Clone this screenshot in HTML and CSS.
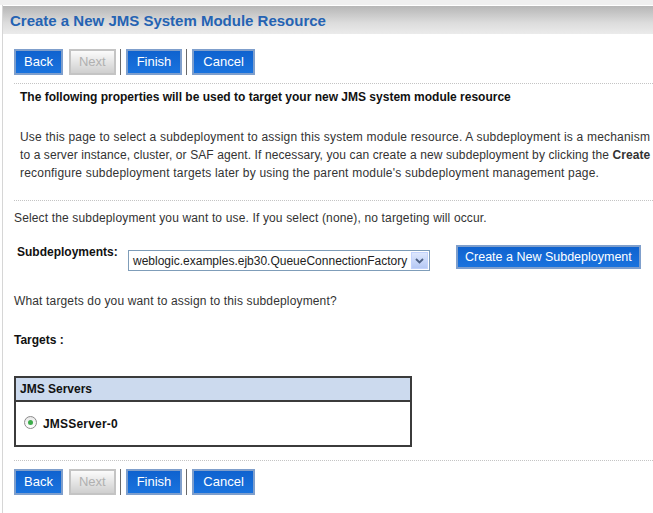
FILE: index.html
```html
<!DOCTYPE html>
<html>
<head>
<meta charset="utf-8">
<title>Create a New JMS System Module Resource</title>
<link rel="stylesheet" href="styles.css">
</head>
<body>
<div class="topstrip"></div>
<div class="page">
  <div class="titlebar"><h1 class="title">Create a New JMS System Module Resource</h1></div>
  <div class="content">
    <div class="btnrow top">
      <button class="btn">Back</button>
      <button class="btn disabled">Next</button>
      <span class="sep"></span>
      <button class="btn finish">Finish</button>
      <span class="sep"></span>
      <button class="btn cancel">Cancel</button>
    </div>
    <div class="dots"></div>
    <div class="intro">
      <p class="lead">The following properties will be used to target your new JMS system module resource</p>
      <p class="desc">Use this page to select a subdeployment to assign this system module resource. A subdeployment is a mechanism<br><span class="tight">to a server instance, cluster, or SAF agent. If necessary, you can create a new subdeployment by clicking the <b>Create</b> a</span><br>reconfigure subdeployment targets later by using the parent module's subdeployment management page.</p>
    </div>
    <div class="dots"></div>
    <p class="text first">Select the subdeployment you want to use. If you select (none), no targeting will occur.</p>
    <div class="subrow">
      <span class="label">Subdeployments:</span>
      <div class="select">
        <span class="selval">weblogic.examples.ejb30.QueueConnectionFactory</span>
        <span class="selarrow"><svg width="9" height="6" viewBox="0 0 9 6"><path d="M1 1 L4.5 4.5 L8 1" fill="none" stroke="#4d6185" stroke-width="1.8"/></svg></span>
      </div>
      <button class="btn create">Create a New Subdeployment</button>
    </div>
    <p class="text what">What targets do you want to assign to this subdeployment?</p>
    <p class="label targets">Targets :</p>
    <div class="table">
      <div class="thead">JMS Servers</div>
      <div class="trow"><span class="radio"><span class="dot"></span></span><span class="server">JMSServer-0</span></div>
    </div>
    <div class="dots bottom"></div>
    <div class="btnrow">
      <button class="btn">Back</button>
      <button class="btn disabled">Next</button>
      <span class="sep"></span>
      <button class="btn finish">Finish</button>
      <span class="sep"></span>
      <button class="btn cancel">Cancel</button>
    </div>
  </div>
</div>
</body>
</html>
```
FILE: styles.css
```css
html, body {
  margin: 0;
  padding: 0;
  overflow: hidden;
  background: #fff;
}
body {
  font-family: "Liberation Sans", Arial, sans-serif;
  font-size: 12px;
  color: #222;
  width: 653px;
  height: 513px;
}
.topstrip {
  height: 5px;
  background: #efefef;
}
.page {
  margin-left: 2px;
  border-left: 1px solid #d6d6d6;
  height: 508px;
}
.titlebar {
  border-top: 1px solid #fff;
  height: 28px;
  background: linear-gradient(#b6b6b6, #dcdcdc 60%, #ebebeb);
  display: flex;
  align-items: center;
  padding-left: 7px;
}
.title {
  margin: 0;
  font-size: 15px;
  font-weight: bold;
  color: #2563b3;
}
.content {
  padding-left: 11px;
}
.btnrow {
  display: flex;
  align-items: center;
  height: 26px;
  margin-top: 8px;
}
.btnrow.top {
  margin-top: 15px;
}
.btn {
  height: 26px;
  box-sizing: border-box;
  border: 2px solid #7f9fcc;
  background: linear-gradient(#0f62cf, #1a73de);
  color: #fff;
  font-family: "Liberation Sans", Arial, sans-serif;
  font-size: 13px;
  padding: 0 8px;
  margin: 0;
  line-height: 20px;
}
.btn.finish {
  padding: 0 9px;
}
.btn.cancel {
  padding: 0 9px;
}
.btn.disabled {
  background: linear-gradient(#fbfbfb, #cfcfcf);
  border-color: #c4c4c4;
  color: #b0b0b0;
  margin-left: 6px;
}
.sep {
  width: 1px;
  height: 26px;
  background: #6a6a6a;
  margin: 0 5px 0 4px;
}
.dots {
  border-top: 1px dotted #c4c4c4;
  margin-top: 8px;
  height: 0;
}
.intro {
  padding-left: 6px;
}
.lead {
  margin: 6px 0 0 0;
  font-weight: bold;
  line-height: 14px;
  color: #111;
}
.desc {
  margin: 24px 0 0 0;
  line-height: 18px;
  white-space: nowrap;
  color: #333;
  letter-spacing: 0.2px;
}
.desc .tight {
  letter-spacing: 0.1px;
}
.intro + .dots {
  margin-top: 18px;
}
.text {
  margin: 0;
  line-height: 14px;
  color: #333;
  letter-spacing: 0.15px;
}
.text.first {
  margin-top: 10px;
}
.subrow {
  display: flex;
  align-items: flex-start;
  margin-top: 20px;
  height: 26px;
}
.label {
  font-weight: bold;
  color: #111;
  line-height: 14px;
  margin-left: 3px;
  width: 111px;
}
.select {
  margin-top: 5px;
  width: 302px;
  height: 21px;
  box-sizing: border-box;
  border: 1px solid #7f9db9;
  display: flex;
  align-items: center;
  justify-content: space-between;
  padding: 0 1px 0 4px;
  background: #fff;
}
.selval {
  font-size: 12px;
  color: #222;
  white-space: nowrap;
}
.selarrow {
  width: 17px;
  height: 17px;
  background: linear-gradient(#dde7fd, #b6c9f5);
  border: 1px solid #c3d3fd;
  box-sizing: border-box;
  display: flex;
  align-items: center;
  justify-content: center;
}
.btn.create {
  margin-left: 26px;
  height: 24px;
  line-height: 18px;
  font-size: 12.5px;
  padding: 0 7px;
}
.text.what {
  margin-top: 23px;
}
.targets {
  margin: 25px 0 0 0;
}
.table {
  margin-top: 29px;
  width: 398px;
  box-sizing: border-box;
  border: 2px solid #3b3b3b;
}
.thead {
  background: #ccdaee;
  border-bottom: 2px solid #3b3b3b;
  height: 22px;
  line-height: 22px;
  padding-left: 4px;
  font-weight: bold;
  color: #111;
}
.trow {
  height: 43px;
  display: flex;
  align-items: center;
  padding-left: 8px;
}
.radio {
  width: 11px;
  height: 11px;
  border-radius: 50%;
  border: 1px solid #8b8b8b;
  background: linear-gradient(#e9e9e9, #fff);
  display: flex;
  align-items: center;
  justify-content: center;
  margin-top: -2px;
}
.dot {
  width: 5px;
  height: 5px;
  border-radius: 50%;
  background: #3cac4a;
}
.server {
  font-weight: bold;
  margin-left: 6px;
  color: #111;
  letter-spacing: 0.2px;
}
.dots.bottom {
  margin-top: 13px;
}
```
